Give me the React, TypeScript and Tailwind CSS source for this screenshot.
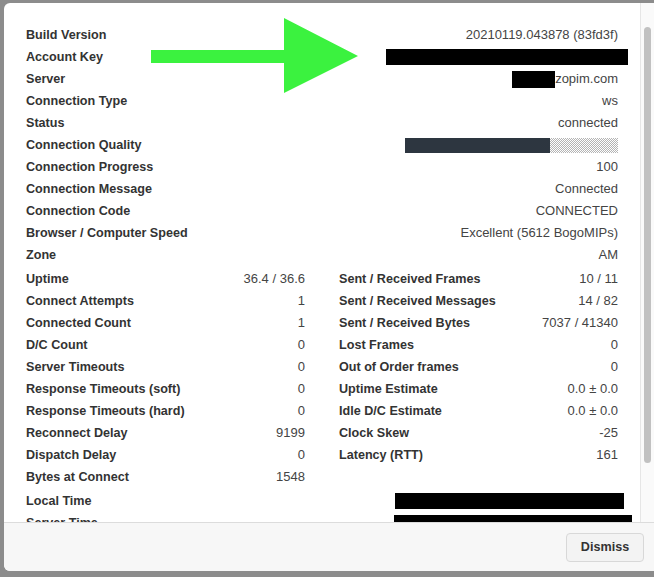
const full: [string, string][] = [
  ['Build Version', '20210119.043878 (83fd3f)'],
  ['Account Key', ''],
  ['Server', 'zopim.com'],
  ['Connection Type', 'ws'],
  ['Status', 'connected'],
  ['Connection Quality', ''],
  ['Connection Progress', '100'],
  ['Connection Message', 'Connected'],
  ['Connection Code', 'CONNECTED'],
  ['Browser / Computer Speed', 'Excellent (5612 BogoMIPs)'],
  ['Zone', 'AM'],
];

const left: [string, string][] = [
  ['Uptime', '36.4 / 36.6'],
  ['Connect Attempts', '1'],
  ['Connected Count', '1'],
  ['D/C Count', '0'],
  ['Server Timeouts', '0'],
  ['Response Timeouts (soft)', '0'],
  ['Response Timeouts (hard)', '0'],
  ['Reconnect Delay', '9199'],
  ['Dispatch Delay', '0'],
  ['Bytes at Connect', '1548'],
];

const right: [string, string][] = [
  ['Sent / Received Frames', '10 / 11'],
  ['Sent / Received Messages', '14 / 82'],
  ['Sent / Received Bytes', '7037 / 41340'],
  ['Lost Frames', '0'],
  ['Out of Order frames', '0'],
  ['Uptime Estimate', '0.0 ± 0.0'],
  ['Idle D/C Estimate', '0.0 ± 0.0'],
  ['Clock Skew', '-25'],
  ['Latency (RTT)', '161'],
];

const Row = ({ label, children }: { label: string; children?: React.ReactNode }) => (
  <div className="flex h-[22px] items-center justify-between">
    <span className="text-[12.6px] font-bold text-[#333]">{label}</span>
    <span className="flex items-center text-[13px] text-[#444]">{children}</span>
  </div>
);

const Arrow = () => (
  <svg className="absolute left-[147px] top-[15px]" width="208" height="76" viewBox="0 0 208 76">
    <polygon points="0,32 133,32 133,0 207,38 133,75 133,45 0,45" fill="#3bf23f" />
  </svg>
);

export default function App() {
  return (
    <div className="h-[577px] w-[654px] bg-[#8c8c8c] pl-[4px] pt-[3px] pb-[6px]" style={{ fontFamily: '"Liberation Sans", Arial, sans-serif' }}>
      <div className="relative flex h-full flex-col overflow-hidden rounded-l-[6px] bg-white">
        <div className="flex min-h-0 flex-1">
          <div className="relative flex-1 overflow-hidden pl-[22px] pr-[22px] pt-[21px]">
            {full.map(([label, value]) => (
              <Row key={label} label={label}>
                {label === 'Account Key' && <span className="mr-[-10px] h-[16px] w-[242px] bg-black" />}
                {label === 'Server' && <span className="h-[17px] w-[43px] bg-black" />}
                {label === 'Connection Quality' && (
                  <span className="flex h-[15px] w-[213px]">
                    <span className="h-full w-[145px] bg-[#2d3640]" />
                    <span className="h-full flex-1 bg-[repeating-conic-gradient(#b4b4b4_0_25%,#fff_0_50%)] bg-[length:2px_2px]" />
                  </span>
                )}
                {value}
              </Row>
            ))}
            <div className="mt-[2px] grid grid-cols-2 gap-x-[34px]">
              <div>
                {left.map(([label, value]) => (
                  <Row key={label} label={label}>{value}</Row>
                ))}
              </div>
              <div>
                {right.map(([label, value]) => (
                  <Row key={label} label={label}>{value}</Row>
                ))}
              </div>
            </div>
            <div className="mt-[2px]">
              <Row label="Local Time">
                <span className="mr-[-6px] h-[16px] w-[229px] bg-black" />
              </Row>
              <Row label="Server Time">
                <span className="mr-[-14px] h-[16px] w-[238px] bg-black" />
              </Row>
            </div>
            <Arrow />
          </div>
          <div className="w-[14px] border-l border-[#e6e6e6] bg-[#fafafa] pt-[24px]">
            <div className="ml-[3px] h-[436px] w-[7px] rounded-full bg-[#c1c1c1]" />
          </div>
        </div>
        <div className="flex h-[49px] items-center justify-end border-t border-[#dcdcdc] bg-[#f7f7f7] pr-[10px]">
          <button className="h-[29px] w-[78px] rounded-[4px] border border-[#d8d8d8] bg-[#f3f3f3] text-[12.6px] font-bold text-[#333]">
            Dismiss
          </button>
        </div>
      </div>
    </div>
  );
}
